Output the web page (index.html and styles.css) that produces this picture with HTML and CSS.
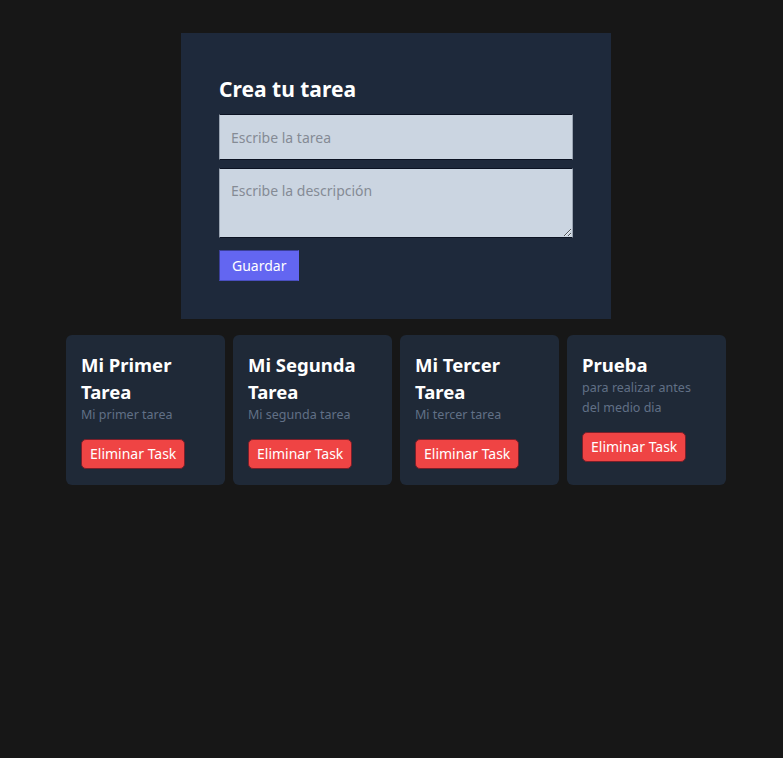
FILE: index.html
```html
<!DOCTYPE html>
<html lang="es">
<head>
<meta charset="utf-8">
<title>Tareas</title>
<link rel="stylesheet" href="styles.css">
</head>
<body>
<main class="wrap">
  <form class="task-form">
    <h1 class="form-title">Crea tu tarea</h1>
    <input class="field field-input" type="text" placeholder="Escribe la tarea">
    <textarea class="field field-area" placeholder="Escribe la descripción"></textarea>
    <button class="save-btn" type="button">Guardar</button>
  </form>
  <section class="cards">
    <article class="card">
      <h2 class="card-title">Mi Primer Tarea</h2>
      <p class="card-desc">Mi primer tarea</p>
      <button class="del-btn" type="button">Eliminar Task</button>
    </article>
    <article class="card">
      <h2 class="card-title">Mi Segunda Tarea</h2>
      <p class="card-desc">Mi segunda tarea</p>
      <button class="del-btn" type="button">Eliminar Task</button>
    </article>
    <article class="card">
      <h2 class="card-title">Mi Tercer Tarea</h2>
      <p class="card-desc">Mi tercer tarea</p>
      <button class="del-btn" type="button">Eliminar Task</button>
    </article>
    <article class="card">
      <h2 class="card-title">Prueba</h2>
      <p class="card-desc">para realizar antes del medio dia</p>
      <button class="del-btn" type="button">Eliminar Task</button>
    </article>
  </section>
</main>
</body>
</html>
```
FILE: styles.css
```css
html, body {
  margin: 0;
  padding: 0;
  background: #171717;
  font-family: "Noto Sans", "Open Sans", sans-serif;
  color: #ffffff;
}
.wrap {
  width: 660px;
  margin-left: 66px;
  padding-top: 33px;
  display: flex;
  flex-direction: column;
  align-items: center;
  gap: 16px;
}
.task-form {
  box-sizing: border-box;
  width: 430px;
  background: #1e293b;
  padding: 38px;
  display: flex;
  flex-direction: column;
  align-items: flex-start;
}
.form-title {
  margin: 0 0 9px 0;
  padding-top: 2px;
  font-size: 21px;
  line-height: 32px;
  font-weight: 700;
  color: #ffffff;
}
.field {
  box-sizing: border-box;
  width: 100%;
  background: #cbd5e1;
  border: 1px solid #0b1222;
  border-left-color: #9aa4b2;
  border-right-color: #9aa4b2;
  padding: 11px 11px;
  font-family: inherit;
  font-size: 14px;
  line-height: 22px;
  color: #111827;
  outline: none;
  margin: 0;
}
.field::placeholder {
  color: #858b95;
}
.field-input {
  height: 46px;
}
.field-area {
  height: 70px;
  margin-top: 8px;
  resize: vertical;
  display: block;
}
.save-btn {
  margin-top: 12px;
  height: 31px;
  padding: 0 12px;
  background: #6366f1;
  color: #ffffff;
  border: 1px solid #3b3f9a;
  border-right-color: #6366f1;
  border-bottom-color: #4a4fc0;
  font-family: inherit;
  font-size: 14px;
  line-height: 22px;
  cursor: pointer;
}
.cards {
  width: 100%;
  display: grid;
  grid-template-columns: repeat(4, 1fr);
  gap: 8px;
}
.card {
  background: #1f2937;
  border-radius: 6px;
  padding: 16px 15px;
  display: flex;
  flex-direction: column;
  align-items: flex-start;
  min-height: 118px;
}
.card-title {
  margin: 0;
  font-size: 18.5px;
  line-height: 27px;
  font-weight: 700;
  color: #ffffff;
}
.card-desc {
  margin: 0;
  font-size: 12.5px;
  line-height: 20px;
  color: #617086;
}
.del-btn {
  margin-top: 14px;
  height: 30px;
  padding: 0 8px;
  background: #ef4444;
  color: #ffffff;
  border: 1px solid #7a1f2a;
  border-radius: 5px;
  font-family: inherit;
  font-size: 14px;
  line-height: 22px;
  cursor: pointer;
}
```
